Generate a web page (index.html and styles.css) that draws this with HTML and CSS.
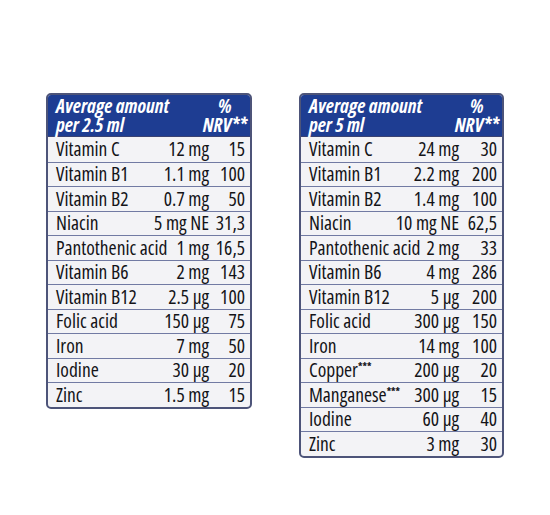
FILE: index.html
```html
<!DOCTYPE html>
<html>
<head>
<meta charset="utf-8">
<link rel="stylesheet" href="styles.css">
</head>
<body>
<div class="wrap">
  <div class="panel panel-left">
    <div class="head">
      <div class="h-left"><div>Average amount</div><div>per 2.5 ml</div></div>
      <div class="h-right"><div>%</div><div>NRV**</div></div>
    </div>
    <div class="row"><span class="n">Vitamin C</span><span class="a">12 mg</span><span class="p">15</span></div>
    <div class="row"><span class="n">Vitamin B1</span><span class="a">1.1 mg</span><span class="p">100</span></div>
    <div class="row"><span class="n">Vitamin B2</span><span class="a">0.7 mg</span><span class="p">50</span></div>
    <div class="row"><span class="n">Niacin</span><span class="a">5 mg NE</span><span class="p">31,3</span></div>
    <div class="row"><span class="n">Pantothenic acid</span><span class="a">1 mg</span><span class="p">16,5</span></div>
    <div class="row"><span class="n">Vitamin B6</span><span class="a">2 mg</span><span class="p">143</span></div>
    <div class="row"><span class="n">Vitamin B12</span><span class="a">2.5 µg</span><span class="p">100</span></div>
    <div class="row"><span class="n">Folic acid</span><span class="a">150 µg</span><span class="p">75</span></div>
    <div class="row"><span class="n">Iron</span><span class="a">7 mg</span><span class="p">50</span></div>
    <div class="row"><span class="n">Iodine</span><span class="a">30 µg</span><span class="p">20</span></div>
    <div class="row"><span class="n">Zinc</span><span class="a">1.5 mg</span><span class="p">15</span></div>
  </div>
  <div class="panel panel-right">
    <div class="head">
      <div class="h-left"><div>Average amount</div><div>per 5 ml</div></div>
      <div class="h-right"><div>%</div><div>NRV**</div></div>
    </div>
    <div class="row"><span class="n">Vitamin C</span><span class="a">24 mg</span><span class="p">30</span></div>
    <div class="row"><span class="n">Vitamin B1</span><span class="a">2.2 mg</span><span class="p">200</span></div>
    <div class="row"><span class="n">Vitamin B2</span><span class="a">1.4 mg</span><span class="p">100</span></div>
    <div class="row"><span class="n">Niacin</span><span class="a">10 mg NE</span><span class="p">62,5</span></div>
    <div class="row"><span class="n">Pantothenic acid</span><span class="a">2 mg</span><span class="p">33</span></div>
    <div class="row"><span class="n">Vitamin B6</span><span class="a">4 mg</span><span class="p">286</span></div>
    <div class="row"><span class="n">Vitamin B12</span><span class="a">5 µg</span><span class="p">200</span></div>
    <div class="row"><span class="n">Folic acid</span><span class="a">300 µg</span><span class="p">150</span></div>
    <div class="row"><span class="n">Iron</span><span class="a">14 mg</span><span class="p">100</span></div>
    <div class="row"><span class="n">Copper<sup>***</sup></span><span class="a">200 µg</span><span class="p">20</span></div>
    <div class="row"><span class="n">Manganese<sup>***</sup></span><span class="a">300 µg</span><span class="p">15</span></div>
    <div class="row"><span class="n">Iodine</span><span class="a">60 µg</span><span class="p">40</span></div>
    <div class="row"><span class="n">Zinc</span><span class="a">3 mg</span><span class="p">30</span></div>
  </div>
</div>
</body>
</html>
```
FILE: styles.css
```css
html, body {
  margin: 0;
  padding: 0;
  background: #ffffff;
}
body {
  width: 550px;
  height: 515px;
  font-family: "Open Sans", "Liberation Sans", sans-serif;
  font-stretch: 75%;
  color: #141418;
}
.wrap {
  display: flex;
  align-items: flex-start;
  padding: 93px 0 0 46px;
  gap: 47px;
}
.panel {
  background: #f3f3f6;
  border: 2px solid #4d5479;
  border-radius: 5px;
  overflow: hidden;
  box-sizing: border-box;
}
.panel-left { width: 206px; }
.panel-right { width: 205px; }
.head {
  background: #1e3d92;
  color: #ffffff;
  display: flex;
  justify-content: space-between;
  height: 42px;
  box-sizing: border-box;
  padding: 1px 3px 0 8px;
  font-weight: bold;
  font-style: italic;
  font-size: 19.3px;
  line-height: 19px;
  border-bottom: 1.5px solid #3a4272;
}
.h-right {
  text-align: center;
}
.row {
  display: flex;
  align-items: center;
  height: 24.5px;
  box-sizing: border-box;
  border-top: 1.5px solid #717aa3;
  font-size: 19.5px;
  font-weight: 450;
  padding: 0 5px 1px 8px;
}
.head + .row { border-top: none; }
.n { flex: 1; white-space: nowrap; }
.n sup { font-size: 10px; vertical-align: 7px; line-height: 0; font-weight: bold; }
.a { text-align: right; white-space: nowrap; }
.p { width: 36px; text-align: right; }
.panel-right .p { width: 38px; }
```
